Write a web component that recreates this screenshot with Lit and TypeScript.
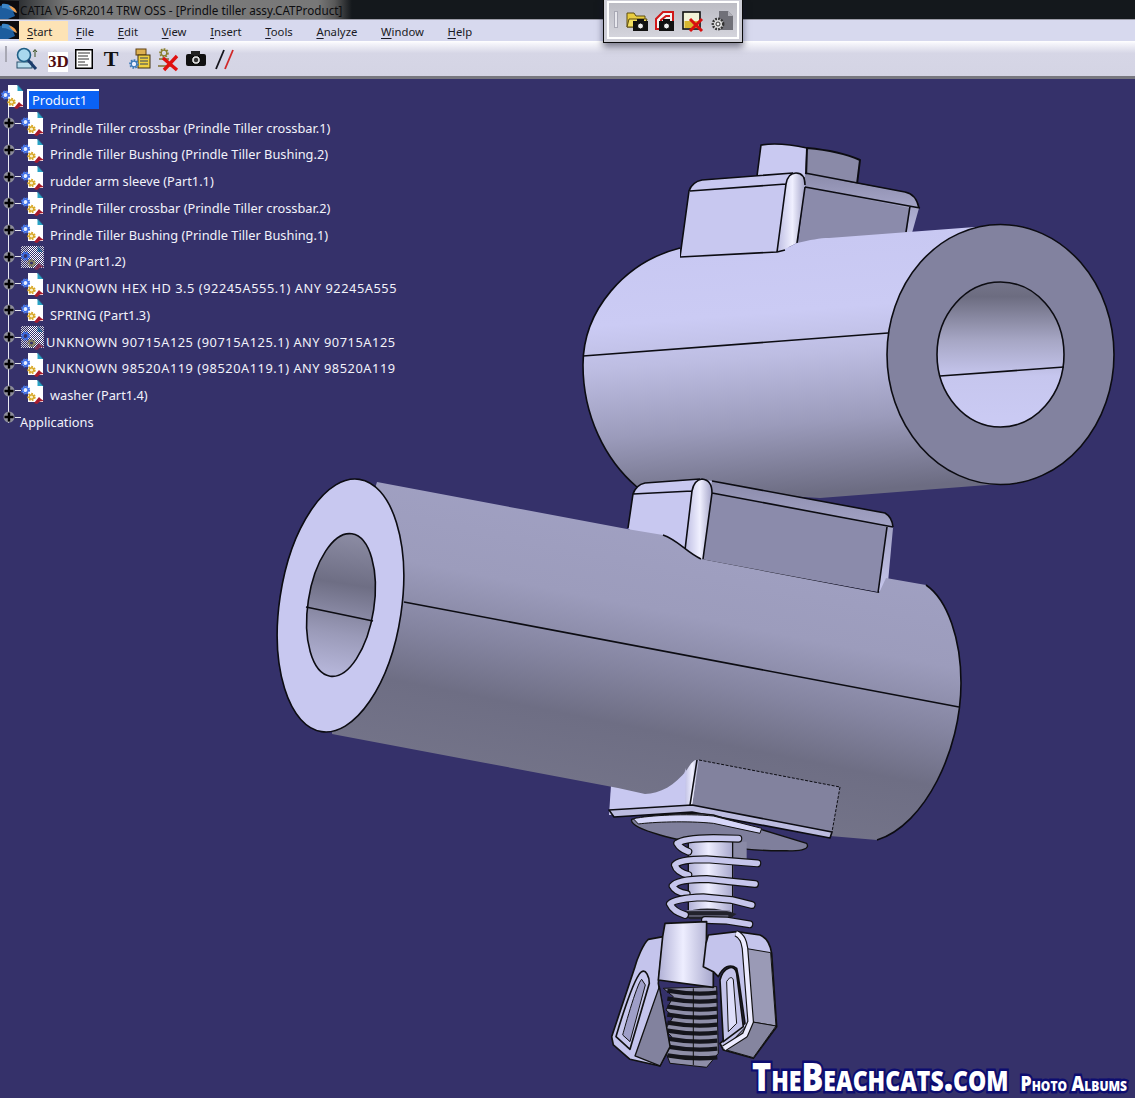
import { LitElement, html, svg, css } from 'lit';
import { customElement } from 'lit/decorators.js';

const MENUS = ['File', 'Edit', 'View', 'Insert', 'Tools', 'Analyze', 'Window', 'Help'];

const TREE = [
	{ label: 'Prindle Tiller crossbar (Prindle Tiller crossbar.1)' },
	{ label: 'Prindle Tiller Bushing (Prindle Tiller Bushing.2)' },
	{ label: 'rudder arm sleeve (Part1.1)' },
	{ label: 'Prindle Tiller crossbar (Prindle Tiller crossbar.2)' },
	{ label: 'Prindle Tiller Bushing (Prindle Tiller Bushing.1)' },
	{ label: 'PIN (Part1.2)', hidden: true },
	{ label: 'UNKNOWN HEX HD 3.5 (92245A555.1) ANY 92245A555', tight: true },
	{ label: 'SPRING (Part1.3)' },
	{ label: 'UNKNOWN 90715A125 (90715A125.1) ANY 90715A125', hidden: true, tight: true },
	{ label: 'UNKNOWN 98520A119 (98520A119.1) ANY 98520A119', tight: true },
	{ label: 'washer (Part1.4)' },
];

const gear = (x: number, y: number, r: number, color: string, hub = 'none') => svg`
	<circle cx=${x} cy=${y} r=${r} fill=${hub} stroke=${color} stroke-width="2.4" stroke-dasharray="1.6 1.1"></circle>
	<circle cx=${x} cy=${y} r=${r - 0.8} fill="none" stroke=${color} stroke-width="1.2"></circle>`;

const catiaLogo = () => html`
	<svg class="logo" viewBox="0 0 19 18">
		<rect width="19" height="18" fill="#0c0c10"></rect>
		<path d="M0 5 C6 2 12 6 15 15 L8 18 L0 18Z" fill="#1d5d9e"></path>
		<path d="M2 3 C8 2 13 5 16 12 C11 9 7 7 2 7Z" fill="#3c86c8"></path>
		<path d="M9 5 C13 5 16 8 17 12 C14 11 11 8 9 5Z" fill="#f0a050"></path>
	</svg>`;

const nodeIcon = (hidden = false) => html`
	<svg class="node-icon" viewBox="0 0 24 24">
		${hidden ? svg`<rect width="23" height="22" fill="#d0d0d8"></rect>` : ''}
		<path d="M7 0 H16.5 L22 6 V22 H7Z" fill="#fff"></path>
		<path d="M16.5 0 L22 6 H16.5Z" fill="#2aa3c4"></path>
		<path d="M16.5 0 L22.5 6.5" stroke="#1c6d96" fill="none"></path>
		${hidden ? svg`<rect width="24" height="24" fill="url(#dither)"></rect>` : ''}
		${gear(4.5, 10, 3.4, '#3d6fe8', hidden ? '#35316a' : '#e8eeff')}
		${gear(10.5, 17, 3, hidden ? '#8a8460' : '#d8a828', hidden ? '#35316a' : '#f8f0c8')}
		<path d="M13 23 L18 17 L20 19 L23 21 L19 21.5 L16 24Z" fill=${hidden ? '#7c2c50' : '#a81c2c'}></path>
	</svg>`;

const plusNode = () => html`
	<svg class="plus" viewBox="0 0 12 12">
		<circle cx="6" cy="6" r="5.5" fill="#8d8d9a"></circle>
		<path d="M1.5 6 H10.5 M6 1.5 V10.5" stroke="#000" stroke-width="2.4"></path>
	</svg>`;

const toolIcons = () => html`
	<svg class="tb" style="left:15px" viewBox="0 0 26 26">
		<rect x="2" y="16" width="15" height="6" fill="#b8dcec" stroke="#28506c"></rect>
		<circle cx="9" cy="9" r="6.5" fill="#a8d8ee" stroke="#1f5f86" stroke-width="1.6"></circle>
		<path d="M13 14 L21 23" stroke="#1c3c6c" stroke-width="3"></path>
		<path d="M20 4 V11 M18 6 L20 3.5 L22 6" stroke="#3a5020" fill="none"></path>
	</svg>
	<div class="tb three-d" style="left:48px">3D</div>
	<svg class="tb" style="left:71px" viewBox="0 0 26 26">
		<rect x="4" y="3" width="18" height="20" fill="#000"></rect>
		<rect x="5.5" y="4.5" width="15" height="17" fill="#fff"></rect>
		<path d="M7 7 H19 M7 10 H17 M7 13 H18 M7 16 H14 M7 19 H17" stroke="#333" stroke-width="1.1"></path>
	</svg>
	<div class="tb big-t" style="left:98px">T</div>
	<svg class="tb" style="left:127px" viewBox="0 0 26 26">
		<rect x="9" y="3" width="10" height="6" fill="#ddb050" stroke="#604010"></rect>
		<rect x="11" y="9" width="12" height="13" fill="#f0d040" stroke="#403010"></rect>
		<path d="M13 12 H21 M13 15 H21 M13 18 H21" stroke="#304060"></path>
		${svg`${gear(7, 18, 3.6, '#3c7ab8', '#e8eeff')}`}
	</svg>
	<svg class="tb" style="left:155px" viewBox="0 0 26 26">
		${svg`${gear(9, 7, 3.6, '#8a8030')}`}
		<path d="M4 13 H14 M3 20 H16" stroke="#807030" stroke-width="1.6"></path>
		<path d="M8 12 L22 24 M22 10 L9 24" stroke="#e01010" stroke-width="3.4"></path>
	</svg>
	<svg class="tb" style="left:183px" viewBox="0 0 26 26">
		<rect x="3" y="8" width="20" height="12" rx="2" fill="#111"></rect>
		<rect x="8" y="5" width="9" height="4" fill="#222"></rect>
		<circle cx="13" cy="14" r="4.4" fill="#ddd" stroke="#000"></circle>
		<circle cx="13" cy="14" r="2.2" fill="#333"></circle>
	</svg>
	<svg class="tb" style="left:211px" viewBox="0 0 26 26">
		<path d="M5 23 L13 4" stroke="#15151c" stroke-width="1.8"></path>
		<path d="M14 23 L22 4" stroke="#d02828" stroke-width="1.8"></path>
	</svg>`;

const camera = (x: number, y: number) => svg`
	<rect x=${x} y=${y + 3} width="15" height="10" fill="#111"></rect>
	<rect x=${x + 4} y=${y + 1} width="7" height="3" fill="#111"></rect>
	<circle cx=${x + 7.5} cy=${y + 8} r="3" fill="#eee" stroke="#000"></circle>`;

const floatIcons = () => html`
	<span class="handle"></span>
	<svg class="fi" viewBox="0 0 24 24">
		<path d="M1 3 H8 L10 6 H19 V17 H1Z" fill="#e8cc40" stroke="#5c4c10"></path>
		<path d="M3 9 H21 L18 17 H1Z" fill="#f2de60" stroke="#5c4c10"></path>
		${camera(7, 8)}
	</svg>
	<svg class="fi" viewBox="0 0 24 24">
		<path d="M2 19 V9 L9 2 H19 V19Z" fill="#f4f4f4" stroke="#d01818" stroke-width="2"></path>
		<path d="M7 18 V10 L12 6 H16" fill="none" stroke="#d01818" stroke-width="2"></path>
		${camera(5, 8)}
	</svg>
	<svg class="fi" viewBox="0 0 24 24">
		<rect x="1" y="2" width="17" height="17" fill="#f2f2d8" stroke="#101010" stroke-width="1.6"></rect>
		<rect x="2.5" y="11" width="14" height="7" fill="#d8b830"></rect>
		<path d="M8 9 L20 21 M20 9 L8 21" stroke="#d81010" stroke-width="3"></path>
	</svg>
	<svg class="fi" viewBox="0 0 24 24">
		<path d="M9 1 H18 L23 6 V20 H9Z" fill="#707078"></path>
		<path d="M18 1 L23 6 H18Z" fill="#b0b0b8"></path>
		<circle cx="8" cy="14" r="5.2" fill="#ddd" stroke="#333" stroke-width="2.4" stroke-dasharray="1.8 1.2"></circle>
		<circle cx="8" cy="14" r="2" fill="#f4f4f4" stroke="#333"></circle>
	</svg>`;

const stripes = [632, 656, 680, 704, 728, 752, 776, 800, 826];

const hardware = () => svg`
	<g transform="translate(580 780) scale(0.3333)" stroke-linejoin="round">
		<path d="M155 118 C 200 105 330 95 400 105 L 680 190 C 690 205 670 215 620 212 C 520 215 320 190 240 165 C 190 150 150 135 155 118Z" fill="#7f7f9c" stroke="#111" stroke-width="4"></path>
		<path d="M160 116 C 210 106 320 100 400 108 L 545 145 L 540 160 L 400 130 C 320 122 220 126 175 132Z" fill="#d6d6f8" stroke="#111" stroke-width="3"></path>

		<rect x="455" y="185" width="45" height="55" fill="#8a8aa6"></rect>
		<rect x="325" y="185" width="135" height="225" fill="url(#stem)"></rect>
		<path d="M325 185 V410 M458 185 V410" stroke="#111" stroke-width="4"></path>

		<path d="M300 400 Q 385 370 470 402 L 445 418 H 330Z" fill="#22222c"></path>
		<path d="M320 392 H 450 M325 408 H 445" stroke="#8b8ba6" stroke-width="3"></path>

		${[
			'M292 190 Q 310 175 400 174 L 475 176 M292 190 Q 300 205 325 215',
			'M285 255 Q 295 238 380 238 L 532 250 M285 255 Q 290 275 325 285',
			'M278 318 Q 290 298 380 297 L 525 312 M278 318 Q 285 335 320 342',
			'M270 372 Q 285 355 370 352 L 455 360 L 515 375 M270 372 Q 280 395 315 405',
			'M375 420 L 440 422 L 508 433',
		].map((d) => svg`
			<path d=${d} fill="none" stroke="#111" stroke-width="24" stroke-linecap="round"></path>
			<path d=${d} fill="none" stroke="#c6c6ec" stroke-width="17" stroke-linecap="round"></path>`)}

		<path d="M250 625 L 280 650 L 258 690 L 280 710 L 255 750 L 275 770 L 255 810 L 270 850 L 380 862 L 415 820 L 410 620Z" fill="#8e8ea8" stroke="#111" stroke-width="3"></path>
		${stripes.map((y) => svg`<path d="M262 ${y} Q 340 ${y + 14} 412 ${y + 6}" fill="none" stroke="#15151c" stroke-width="13"></path>`)}
		<path d="M340 625 V855" stroke="#111" stroke-width="3"></path>

		<path d="M250 470 L 205 478 C 190 490 170 540 165 560 L 95 770 L 100 795 L 150 838 L 240 858 L 270 800 L 235 610Z" fill="#c4c4ec" stroke="#111" stroke-width="5"></path>
		<path d="M238 620 L 165 828 L 240 858 L 270 800Z" fill="#82829e" stroke="#111" stroke-width="4"></path>
		<path d="M185 575 C 160 590 108 770 108 770 L 150 808 L 208 610 C 208 590 198 568 185 575Z" fill="#c8c8ee" stroke="#111" stroke-width="5"></path>
		<path d="M185 598 C 170 610 128 765 128 765 L 150 785 L 196 615Z" fill="#9f9fc8" stroke="#111" stroke-width="3"></path>

		<path d="M255 430 L 380 425 L 378 560 L 400 575 L 400 622 L 235 600 L 248 470Z" fill="url(#stem)" stroke="#111" stroke-width="5"></path>

		<path d="M385 465 L 470 455 L 540 465 C 565 475 572 500 575 520 L 590 740 L 520 835 L 430 810 L 420 790 L 495 730 L 475 590 L 470 565 C 450 550 430 560 415 590 L 400 575 L 370 560 L 378 490Z" fill="#c4c4ec" stroke="#111" stroke-width="5"></path>
		<path d="M495 505 L 572 518 L 588 738 L 512 725Z" fill="#9a9ab6" stroke="#111" stroke-width="3"></path>
		<path d="M512 725 L 588 738 L 520 833 L 432 808Z" fill="#85859f" stroke="#111" stroke-width="3"></path>
		<path d="M468 460 C 490 470 492 490 495 505 L 512 725 L 495 765 L 432 805" fill="none" stroke="#111" stroke-width="20"></path>
		<path d="M468 460 C 490 470 492 490 495 505 L 512 725 L 495 765 L 432 805" fill="none" stroke="#ecebff" stroke-width="13"></path>
		<path d="M420 600 C 430 560 465 550 470 580 L 490 740 L 430 785Z" fill="#c4c4ea" stroke="#111" stroke-width="5"></path>
		<path d="M440 605 C 448 590 458 590 460 600 L 470 730 L 445 755Z" fill="#dedefa" stroke="#111" stroke-width="3"></path>
	</g>`;

const model = () => html`
	<svg class="model" viewBox="0 79 1135 1019">
		<defs>
			<linearGradient id="upperBody" gradientUnits="userSpaceOnUse" x1="780" y1="240" x2="800" y2="495">
				<stop offset="0" stop-color="#c8c8f2"></stop>
				<stop offset="0.28" stop-color="#cbcbf4"></stop>
				<stop offset="0.45" stop-color="#bdbde2"></stop>
				<stop offset="0.72" stop-color="#9b9bbb"></stop>
				<stop offset="1" stop-color="#6c6c82"></stop>
			</linearGradient>
			<linearGradient id="upperHole" x1="0" y1="0" x2="0" y2="1">
				<stop offset="0" stop-color="#74748a"></stop>
				<stop offset="0.1" stop-color="#6c6c80"></stop>
				<stop offset="0.4" stop-color="#a6a6c4"></stop>
				<stop offset="0.65" stop-color="#c6c6ee"></stop>
				<stop offset="1" stop-color="#cbcbf4"></stop>
			</linearGradient>
			<linearGradient id="lowerBody" gradientUnits="userSpaceOnUse" x1="645" y1="520" x2="590" y2="800">
				<stop offset="0" stop-color="#a0a0c2"></stop>
				<stop offset="0.3" stop-color="#9c9cbc"></stop>
				<stop offset="0.52" stop-color="#8585a1"></stop>
				<stop offset="0.72" stop-color="#6e6e84"></stop>
				<stop offset="1" stop-color="#747489"></stop>
			</linearGradient>
			<linearGradient id="lowerHole" x1="0" y1="0" x2="0" y2="1">
				<stop offset="0" stop-color="#8c8ca4"></stop>
				<stop offset="0.35" stop-color="#6e6e84"></stop>
				<stop offset="0.7" stop-color="#9a9ab8"></stop>
				<stop offset="1" stop-color="#b8b8dc"></stop>
			</linearGradient>
			<linearGradient id="fillet" x1="0" y1="0" x2="1" y2="0">
				<stop offset="0" stop-color="#bcbce2"></stop>
				<stop offset="0.55" stop-color="#f0f0ff"></stop>
				<stop offset="1" stop-color="#a4a4c8"></stop>
			</linearGradient>
			<linearGradient id="stem" x1="0" y1="0" x2="1" y2="0">
				<stop offset="0" stop-color="#b0b0d6"></stop>
				<stop offset="0.45" stop-color="#eeeeff"></stop>
				<stop offset="1" stop-color="#a6a6cc"></stop>
			</linearGradient>
			<linearGradient id="chamfer" x1="0" y1="0" x2="0" y2="1">
				<stop offset="0" stop-color="#8b8bab"></stop>
				<stop offset="1" stop-color="#c6c6ec"></stop>
			</linearGradient>
			<pattern id="dither" width="2" height="2" patternUnits="userSpaceOnUse">
				<rect width="1" height="1" fill="#35316a"></rect>
				<rect x="1" y="1" width="1" height="1" fill="#35316a"></rect>
			</pattern>
		</defs>

		<g stroke="#0c0c12" stroke-width="1.6" stroke-linejoin="round">
			<!-- upper bolt head -->
			<path d="M757 176 L761 145 Q 780 142 807 148 L806 178Z" fill="#c9c9f1"></path>
			<path d="M807 148 Q 840 151 860 160 L857 184 L806 178Z" fill="#8a8aa8" stroke-width="2"></path>

			<!-- upper block -->
			<path d="M680 257 L689 191 Q 692 182 702 180 L793 173 Q 800 172 805 174 L786 260Z" fill="#c8c8f0" stroke="none"></path>
			<path d="M805 174 L905 192 Q 916 194 919 208 L910 240 L800 250Z" fill="url(#chamfer)" stroke="none"></path>
			<path d="M805 187 L910 208 L906 240 L797 250Z" fill="#8b8bab" stroke="none"></path>
			<path d="M786 184 Q 788 173 796 173 Q 805 173 805 185 L797 243 L777 253Z" fill="url(#fillet)" stroke="none"></path>
			<path d="M680 257 L689 191 Q 692 182 702 180 L793 173 M690 191 L786 184 L777 252 M805 187 L797 243 M786 184 Q 788 173 796 173 Q 805 173 805 185 M805 173 L905 192 Q 916 194 919 208 M805 187 L920 208 M910 206 L906 232" fill="none"></path>

			<!-- upper cylinder -->
			<path d="M680 248 C 625 262 583 310 583 365 C 583 415 605 460 637 487 L 820 498 L 1000 484 L 1000 226 L 975 227 L 829 238 C 820 238 810 240 797 243 C 790 246 785 250 777 252 L 680 257Z" fill="url(#upperBody)" stroke="none"></path>
			<path d="M680 248 C 625 262 583 310 583 365 C 583 415 605 460 637 487 M680 257 L777 252 L785 250" fill="none"></path>
			<path d="M583 356 L888 333" fill="none"></path>
			<ellipse cx="1000.5" cy="354.5" rx="113.5" ry="130" fill="#82829f"></ellipse>
			<ellipse cx="1000.5" cy="354.5" rx="63.5" ry="72.5" fill="url(#upperHole)"></ellipse>
			<path d="M940 376 L1064 367" fill="none"></path>

			<!-- block on the lower cylinder -->
			<path d="M628 528 L633 494 Q 636 485 645 483 L700 479 L712 481 L704 562 L640 540Z" fill="#c8c8f0" stroke="none"></path>
			<path d="M712 481 L885 513 Q 893 517 893 528 L887 593 L703 560Z" fill="url(#chamfer)" stroke="none"></path>
			<path d="M712 493 L887 527 L878 592 L702 560Z" fill="#8b8bab" stroke="none"></path>
			<path d="M692 491 Q 694 480 702 479 Q 712 480 712 493 L703 560 L685 550Z" fill="url(#fillet)" stroke="none"></path>
			<path d="M628 528 L633 494 Q 636 485 645 483 L700 479 M633 494 L692 491 L685 550 M712 493 L703 559 M692 491 Q 694 480 702 479 Q 712 480 712 493 L893 527 M712 481 L885 513 Q 892 517 893 527 M887 527 L878 593 L702 560" fill="none"></path>

			<!-- lower cylinder -->
			<path d="M611 785 L609 815 L692 812 L699 760 L680 760Z" fill="#c8c8f0" stroke="none"></path>
			<path d="M377 482 L627 529 L663 535 C 678 540 686 552 701 559 L879 593 L886 578 L926 585 C 948 600 961 640 961 683 C 961 750 925 825 877 840 L 830 836 L 700 790 L 687 770 C 675 785 660 794 645 794 L 618 788 L 332 734 L 340 600Z" fill="url(#lowerBody)" stroke="none"></path>
			<path d="M663 535 C 678 540 686 552 701 559 M926 585 C 948 600 961 640 961 683 C 961 750 925 825 877 840" fill="none"></path>
			<path d="M404 602 L959 707" fill="none"></path>
			<path d="M699 760 L840 787 L832 832 L692 805Z" fill="#82829e" stroke="none"></path>
			<path d="M699 760 L840 787 M840 787 L832 832" fill="none" stroke-width="1" stroke-dasharray="3 1.5"></path>
			<path d="M686 768 C 680 785 690 760 696 760 L699 760 L692 806 L685 804Z" fill="url(#fillet)" stroke="none"></path>
			<path d="M697 760 L690 805" fill="none"></path>
			<path d="M609 810 L614 817 L692 812 L830 838 L832 832 L692 805Z" fill="#bcbce0"></path>
			<ellipse cx="340.5" cy="605.5" rx="61" ry="127.5" transform="rotate(8.5 340.5 605.5)" fill="#c8c8f0"></ellipse>
			<ellipse cx="341" cy="605" rx="33" ry="72" transform="rotate(8.7 341 605)" fill="url(#lowerHole)"></ellipse>
			<path d="M306 607 L373 621" fill="none"></path>
		</g>
		${hardware()}
	</svg>`;

@customElement('app-root')
export class AppRoot extends LitElement {

	static styles = css`
		:host {
			display: flex;
			flex-direction: column;
			position: relative;
			width: 1135px;
			height: 1098px;
			overflow: hidden;
			font-family: "Noto Sans", "DejaVu Sans", sans-serif;
			font-size: 11.3px;
			color: #1a1a24;
			background: #35316a;
		}

		.title {
			display: flex;
			align-items: center;
			height: 19px;
			background: linear-gradient(90deg, #101418 0, #7c7c7c 6%, #787878 28%, #585858 29.5%, #14181c 31%);
			border-bottom: 1px solid #9c9ca8;
			box-sizing: content-box;
			color: #0d0d10;
			font-size: 11.7px;
		}

		.title .text { margin: 0 0 0 1px; letter-spacing: 0; }
		.logo { display: block; width: 19px; height: 18px; flex: none; }

		.menu {
			display: flex;
			align-items: center;
			height: 21px;
			padding-top: 1px;
			box-sizing: border-box;
			background: #d7d9ee;
			gap: 23.7px;
		}

		.brand {
			display: flex;
			align-self: stretch;
		}

		.start {
			background: #fde3b5;
			display: flex;
			align-items: center;
			padding: 0 16px 0 8px;
			margin-right: -16px;
		}

		u { text-underline-offset: 2px; }

		.toolbar {
			position: relative;
			height: 35px;
			background: linear-gradient(#ffffff 0, #f4f4fa 8%, #d6d6e6 35%, #d4d4e4 100%);
			border-bottom: 3px solid #77777f;
			box-sizing: content-box;
		}

		.grip {
			position: absolute;
			left: 5px;
			top: 5px;
			width: 2px;
			height: 16px;
			background: #fafafa;
			border: 1px solid #a8a8b4;
			box-sizing: border-box;
		}

		.tb {
			position: absolute;
			top: 5px;
			width: 26px;
			height: 26px;
		}

		.three-d {
			top: 11px;
			width: 20px;
			height: 20px;
			background: #fff;
			color: #500c10;
			font: bold 17px/20px "Liberation Serif", serif;
			text-align: center;
		}

		.big-t {
			font: bold 22px/26px "Liberation Serif", serif;
			color: #111;
			text-align: center;
		}

		.viewport {
			position: relative;
			flex: 1;
			min-height: 0;
		}

		.model {
			position: absolute;
			inset: 0;
			width: 100%;
			height: 100%;
		}

		.tree {
			position: absolute;
			left: 0;
			top: 8.47px;
			display: grid;
			grid-auto-rows: 26.75px;
			color: #f2f2fa;
			font-size: 12.8px;
			white-space: nowrap;
		}

		.tree::before {
			content: '';
			position: absolute;
			left: 7.5px;
			top: 16px;
			bottom: 12px;
			width: 1px;
			background: #e8e8f0;
		}

		.row {
			position: relative;
			display: flex;
			align-items: center;
		}

		.plus {
			width: 12px;
			height: 12px;
			margin: 0 0 9px 3px;
			flex: none;
			position: relative;
		}

		.dash {
			width: 6px;
			height: 1px;
			background: #e8e8f0;
			margin-bottom: 9px;
			flex: none;
		}

		.node-icon {
			width: 24px;
			height: 24px;
			flex: none;
			margin-bottom: 7px;
		}

		.label { margin-left: 5px; }
		.tight .label { margin-left: 1px; letter-spacing: 0.54px; }
		.apps .label { margin-left: -1px; }

		.root .node-icon { margin: 0 0 7px 1px; }

		.selected {
			margin: 0 0 3px 2px;
			width: 72px;
			height: 20px;
			line-height: 19px;
			box-sizing: border-box;
			padding-left: 3px;
			background: #0b62f4;
			border-top: 2px solid #fff;
			border-left: 2px solid #fff;
			color: #f4f8ff;
			font-size: 13px;
		}

		.float {
			position: absolute;
			left: 603px;
			top: -2px;
			width: 140px;
			height: 45px;
			box-sizing: border-box;
			border: 1px solid #0a0a0a;
			padding: 2px 3px 3px;
			background: #cdcdd6;
			box-shadow: 0 4px 7px rgba(20, 20, 50, 0.55);
		}

		.float-inner {
			display: flex;
			align-items: center;
			box-sizing: border-box;
			height: 100%;
			padding: 3px 0 0 5px;
			border: 2px solid #fff;
			background: linear-gradient(#bcbcc4, #d4d4dc);
		}

		.handle {
			width: 2px;
			height: 15px;
			margin: 0 8px 4px 0;
			background: #e8e8ee;
			border: 1px solid #a8a8b4;
			flex: none;
		}

		.fi {
			width: 24px;
			height: 24px;
			margin-right: 4px;
			flex: none;
		}

		.mark {
			position: absolute;
			left: 752px;
			bottom: 1px;
			display: flex;
			align-items: baseline;
			gap: 12px;
			font-family: "Open Sans", "DejaVu Sans", sans-serif;
			font-weight: 800;
			font-variant: small-caps;
			color: #fff;
			-webkit-text-stroke: 4px #0d0d70;
			paint-order: stroke fill;
			white-space: nowrap;
			transform: scaleY(1.2);
			transform-origin: left bottom;
		}

		.mark .site { font-size: 32.5px; line-height: 24px; }
		.mark .albums { font-size: 17.5px; line-height: 24px; }
	`;

	render() {
		return html`
			<div class="title">${catiaLogo()}<span class="text">CATIA V5-6R2014 TRW OSS - [Prindle tiller assy.CATProduct]</span></div>
			<div class="menu">
				<div class="brand">${catiaLogo()}<span class="start"><span><u>S</u>tart</span></span></div>
				${MENUS.map((m) => html`<span><u>${m[0]}</u>${m.slice(1)}</span>`)}
			</div>
			<div class="toolbar"><span class="grip"></span>${toolIcons()}</div>
			<div class="viewport">
				${model()}
				<div class="tree">
					<div class="row root">${nodeIcon()}<span class="selected">Product1</span></div>
					${TREE.map((item) => html`
						<div class="row ${item.tight ? 'tight' : ''}">
							${plusNode()}<span class="dash"></span>${nodeIcon(item.hidden)}
							<span class="label">${item.label}</span>
						</div>`)}
					<div class="row apps">${plusNode()}<span class="dash"></span><span class="label">Applications</span></div>
				</div>
				<div class="mark"><span class="site">TheBeachcats.com</span><span class="albums">Photo Albums</span></div>
			</div>
			<div class="float"><div class="float-inner">${floatIcons()}</div></div>
		`;
	}
}
